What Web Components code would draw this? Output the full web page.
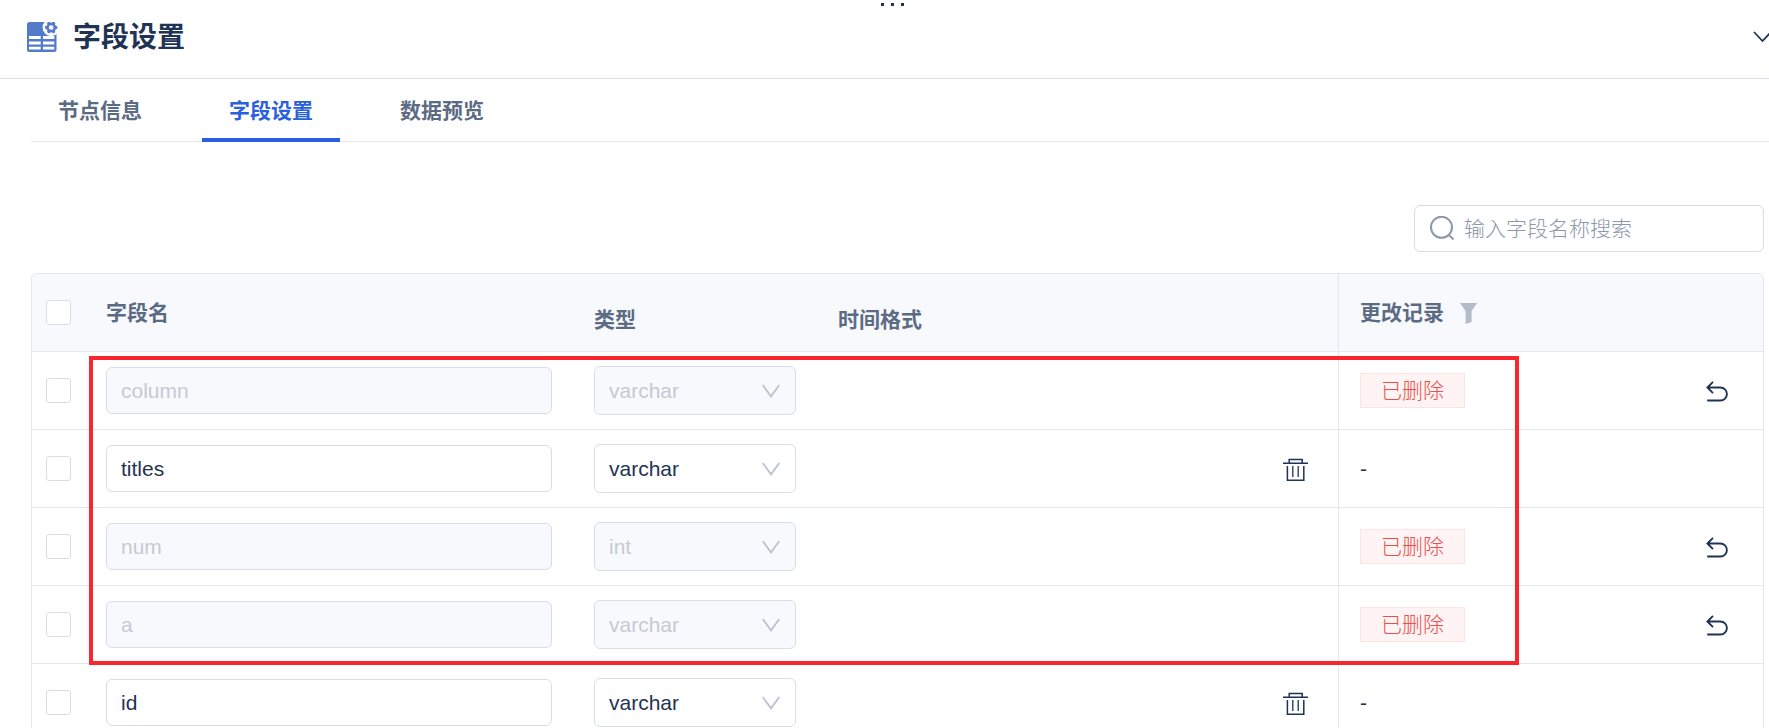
<!DOCTYPE html>
<html lang="zh-CN">
<head>
  <meta charset="UTF-8">
  <meta name="viewport" content="width=device-width, initial-scale=1.0">
  <title>字段设置</title>
  <style>
    :root {
      --text-color: #1f3355;
      --muted-color: #5c6b84;
      --hint-color: #8c97aa;
      --disabled-color: #c5cad3;
      --primary-color: #2a5fdd;
      --danger-color: #e8504d;
      --line-color: #e5e7ef;
      --control-line: #d9dde8;
      --fill-color: #f8f9fd;
    }

    body {
      margin: 0;
      background: white;
      color: var(--text-color);
      font-family: "Liberation Sans", "Noto Sans CJK SC", sans-serif;
      font-size: 21px;
      line-height: 30px;
    }
  </style>
</head>
<body>
  <settings-panel>
    <panel-header slot="header">字段设置</panel-header>
    <tab-bar slot="tabs" tabs="节点信息,字段设置,数据预览" active="1"></tab-bar>
    <search-box placeholder="输入字段名称搜索"></search-box>
    <field-table></field-table>
  </settings-panel>

  <script>
    class SettingsPanel extends HTMLElement {
      constructor() {
        super();
        this.attachShadow({ mode: "open" });
      }

      connectedCallback() {
        this.shadowRoot.innerHTML = `
            <style>
                :host {
                    display: flex;
                    flex-direction: column;
                    height: 100vh;
                    overflow: hidden;
                }

                ::slotted(*) {
                    flex-shrink: 0;
                }

                .content {
                    display: flex;
                    flex-direction: column;
                    gap: 21px;
                    padding: 63px 5px 0 31px;
                }
            </style>

            <slot name="header"></slot>
            <slot name="tabs"></slot>
            <main class="content"><slot></slot></main>
        `;
      }
    }

    class PanelHeader extends HTMLElement {
      constructor() {
        super();
        this.attachShadow({ mode: "open" });
      }

      connectedCallback() {
        this.shadowRoot.innerHTML = `
            <style>
                :host {
                    display: block;
                    position: relative;
                    margin-right: -16px;
                    border-bottom: 1px solid #dcdfe8;
                }

                header {
                    display: flex;
                    align-items: center;
                    gap: 15px;
                    height: 78px;
                    padding: 0 13px 4px 27px;
                    box-sizing: border-box;
                }

                h1 {
                    flex-grow: 1;
                    margin: 0;
                    padding-top: 2px;
                    font-size: 28px;
                    line-height: 40px;
                    font-weight: 700;
                }

                button {
                    padding: 0;
                    border: none;
                    background: none;
                    color: inherit;
                    cursor: pointer;
                }

                svg {
                    display: block;
                }

                .handle {
                    position: absolute;
                    top: 3px;
                    left: 0;
                    right: 0;
                    display: flex;
                    justify-content: center;
                    gap: 7px;
                }

                .handle i {
                    width: 3px;
                    height: 3px;
                    background-color: var(--text-color);
                }
            </style>

            <div class="handle"><i></i><i></i><i></i></div>
            <header>
                <svg width="31" height="30" viewBox="0 0 31 30" aria-hidden="true">
                    <rect width="29.5" height="30" rx="2.5" fill="#527cc9"/>
                    <path fill="white" d="M2 14h11.7v3H2zM16 14h11.3v3H16zM2 19.4h11.7v3H2zM16 19.4h11.3v3H16zM2 24.8h11.7v2.8H2zM16 24.8h11.3v2.8H16z"/>
                    <circle cx="24.2" cy="5.5" r="8.6" fill="white"/>
                    <g fill="#527cc9">
                        <circle cx="24.2" cy="5.5" r="4.9"/>
                        <rect x="18" y="3.9" width="12.4" height="3.2" rx="1"/>
                        <rect x="18" y="3.9" width="12.4" height="3.2" rx="1" transform="rotate(60 24.2 5.5)"/>
                        <rect x="18" y="3.9" width="12.4" height="3.2" rx="1" transform="rotate(120 24.2 5.5)"/>
                    </g>
                    <circle cx="24.2" cy="5.5" r="2.3" fill="white"/>
                </svg>
                <h1><slot></slot></h1>
                <button type="button" aria-label="收起">
                    <svg width="19" height="12" viewBox="0 0 19 12" fill="none" stroke="currentColor" stroke-width="1.8">
                        <path d="M1 1l8.5 9L18 1"/>
                    </svg>
                </button>
            </header>
        `;
      }
    }

    class TabBar extends HTMLElement {
      constructor() {
        super();
        this.attachShadow({ mode: "open" });
      }

      connectedCallback() {
        const tabs = this.getAttribute("tabs").split(",");
        const active = Number(this.getAttribute("active"));

        this.shadowRoot.innerHTML = `
            <style>
                :host {
                    display: block;
                    padding-left: 31px;
                }

                .tabs {
                    display: flex;
                    gap: 33px;
                    box-shadow: inset 0 -1px var(--line-color);
                }

                button {
                    height: 63px;
                    padding: 4px 27px 0;
                    border: none;
                    border-bottom: 4px solid transparent;
                    background: none;
                    color: var(--muted-color);
                    font: inherit;
                    font-weight: 700;
                    cursor: pointer;
                }

                button[aria-selected="true"] {
                    border-bottom-color: var(--primary-color);
                    color: var(--primary-color);
                }
            </style>

            <div class="tabs" role="tablist">
                ${tabs
                  .map((tab, i) => `<button type="button" role="tab" aria-selected="${i === active}">${tab}</button>`)
                  .join("")}
            </div>
        `;

        const buttons = this.shadowRoot.querySelectorAll("button");
        buttons.forEach((button) => {
          button.addEventListener("click", () => {
            buttons.forEach((b) => b.setAttribute("aria-selected", b === button));
          });
        });
      }
    }

    class SearchBox extends HTMLElement {
      constructor() {
        super();
        this.attachShadow({ mode: "open" });
      }

      connectedCallback() {
        const placeholder = this.getAttribute("placeholder") || "";

        this.shadowRoot.innerHTML = `
            <style>
                :host {
                    display: block;
                    align-self: flex-end;
                    width: 350px;
                }

                label {
                    display: flex;
                    align-items: center;
                    gap: 8px;
                    height: 47px;
                    padding: 0 15px;
                    border: 1px solid #d8dbe8;
                    border-radius: 6px;
                    box-sizing: border-box;
                    color: var(--hint-color);
                }

                svg {
                    flex-shrink: 0;
                }

                input {
                    flex-grow: 1;
                    min-width: 0;
                    padding: 0;
                    border: none;
                    outline: none;
                    background: none;
                    color: var(--text-color);
                    font: inherit;
                    font-weight: 300;
                }

                input::placeholder {
                    color: var(--hint-color);
                }
            </style>

            <label>
                <svg width="26" height="26" viewBox="0 0 26 26" fill="none" stroke="currentColor" stroke-width="2" aria-hidden="true">
                    <circle cx="11.5" cy="11.3" r="10.5"/>
                    <path d="M18.5 18.5l5 5"/>
                </svg>
                <input type="text" placeholder="${placeholder}" aria-label="${placeholder}">
            </label>
        `;
      }
    }

    class TypeSelect extends HTMLElement {
      constructor() {
        super();
        this.attachShadow({ mode: "open" });
      }

      connectedCallback() {
        const value = this.getAttribute("value");
        const disabled = this.hasAttribute("disabled") ? "disabled" : "";
        const types = ["varchar", "int"];

        this.shadowRoot.innerHTML = `
            <style>
                :host {
                    display: grid;
                    align-items: center;
                    width: 202px;
                }

                select,
                svg {
                    grid-area: 1 / 1;
                }

                select {
                    appearance: none;
                    width: 100%;
                    height: 49px;
                    padding: 0 40px 0 14px;
                    border: 1px solid var(--control-line);
                    border-radius: 6px;
                    background-color: white;
                    color: var(--text-color);
                    font: inherit;
                }

                select:disabled {
                    background-color: var(--fill-color);
                    color: var(--disabled-color);
                    opacity: 1;
                }

                svg {
                    justify-self: end;
                    margin-right: 16px;
                    pointer-events: none;
                }
            </style>

            <select aria-label="类型" ${disabled}>
                ${types.map((t) => `<option ${t === value ? "selected" : ""}>${t}</option>`).join("")}
            </select>
            <svg width="18" height="14" viewBox="0 0 18 14" fill="none" stroke="#bcc2cf" stroke-width="1.8" aria-hidden="true">
                <path d="M.7 1L9 12.4 17.3 1"/>
            </svg>
        `;
      }
    }

    class NameInput extends HTMLElement {
      constructor() {
        super();
        this.attachShadow({ mode: "open" });
      }

      connectedCallback() {
        const value = this.getAttribute("value") || "";
        const disabled = this.hasAttribute("disabled") ? "disabled" : "";

        this.shadowRoot.innerHTML = `
            <style>
                :host {
                    display: block;
                }

                input {
                    display: block;
                    width: 100%;
                    height: 47px;
                    padding: 0 14px;
                    border: 1px solid var(--control-line);
                    border-radius: 6px;
                    box-sizing: border-box;
                    background-color: white;
                    color: var(--text-color);
                    font: inherit;
                }

                input:disabled {
                    background-color: var(--fill-color);
                    color: var(--disabled-color);
                }
            </style>

            <input type="text" aria-label="字段名" value="${value}" ${disabled}>
        `;
      }
    }

    class StatusTag extends HTMLElement {
      constructor() {
        super();
        this.attachShadow({ mode: "open" });
      }

      connectedCallback() {
        this.shadowRoot.innerHTML = `
            <style>
                :host {
                    display: inline-block;
                    padding: 0 20px;
                    border: 1px solid #fde3e1;
                    background-color: #fff4f3;
                    color: var(--danger-color);
                    font-weight: 300;
                    line-height: 33px;
                    vertical-align: middle;
                }
            </style>

            <slot></slot>
        `;
      }
    }

    class IconButton extends HTMLElement {
      constructor() {
        super();
        this.attachShadow({ mode: "open" });
      }

      connectedCallback() {
        const icons = {
          trash: `
            <svg width="25" height="24" viewBox="0 0 25 24" fill="none" stroke="currentColor" stroke-width="1.5">
                <path d="M0 5.2h25M6.2 5V1.4h13V5M4.4 8v14.2h16.4V8"/>
                <path d="M9.8 8v11M15.2 8v11" stroke-width="1.3"/>
            </svg>`,
          undo: `
            <svg width="22" height="21" viewBox="0 0 22 21" fill="none" stroke="currentColor" stroke-width="1.9">
                <path d="M7 .9L1.4 6.5 7 12.1M1.4 6.5h13a6.5 6.5 0 0 1 0 13H1.2"/>
            </svg>`,
        };

        this.shadowRoot.innerHTML = `
            <style>
                :host {
                    display: inline-block;
                    vertical-align: middle;
                }

                button {
                    display: block;
                    padding: 0;
                    border: none;
                    background: none;
                    color: inherit;
                    cursor: pointer;
                }

                svg {
                    display: block;
                }
            </style>

            <button type="button" aria-label="${this.getAttribute("label")}">${icons[this.getAttribute("icon")]}</button>
        `;
      }
    }

    class FieldTable extends HTMLElement {
      constructor() {
        super();
        this.attachShadow({ mode: "open" });

        this.fields = [
          { name: "column", type: "varchar", deleted: true },
          { name: "titles", type: "varchar", deleted: false },
          { name: "num", type: "int", deleted: true },
          { name: "a", type: "varchar", deleted: true },
          { name: "id", type: "varchar", deleted: false },
        ];
      }

      renderRow({ name, type, deleted }) {
        const disabled = deleted ? "disabled" : "";

        return `
            <tr>
                <td class="check"><input type="checkbox" aria-label="${name}"></td>
                <td class="name"><name-input value="${name}" ${disabled}></name-input></td>
                <td><type-select value="${type}" ${disabled}></type-select></td>
                <td></td>
                <td class="remove">${deleted ? "" : `<icon-button icon="trash" label="删除"></icon-button>`}</td>
                <td class="change">${deleted ? "<status-tag>已删除</status-tag>" : "-"}</td>
                <td class="restore">${deleted ? `<icon-button icon="undo" label="恢复"></icon-button>` : ""}</td>
            </tr>`;
      }

      connectedCallback() {
        this.shadowRoot.innerHTML = `
            <style>
                :host {
                    display: block;
                    position: relative;
                }

                table {
                    width: 100%;
                    table-layout: fixed;
                    border: 1px solid var(--line-color);
                    border-radius: 6px;
                    border-collapse: separate;
                    border-spacing: 0;
                    overflow: hidden;
                }

                .col-check { width: 57px; }
                .col-name { width: 488px; }
                .col-type { width: 244px; }
                .col-remove { width: 72px; }
                .col-change { width: 300px; }
                .col-restore { width: 125px; }

                th,
                td {
                    height: 78px;
                    padding: 0 0 0 17px;
                    border-bottom: 1px solid var(--line-color);
                    box-sizing: border-box;
                    text-align: left;
                    vertical-align: middle;
                }

                th {
                    background-color: var(--fill-color);
                    color: var(--muted-color);
                    font-weight: 700;
                }

                th.plain {
                    padding-top: 14px;
                }

                .check {
                    padding-left: 14px;
                }

                .name {
                    padding-right: 25px;
                }

                .change {
                    padding-left: 21px;
                    border-left: 1px solid var(--line-color);
                }

                .remove,
                .restore {
                    padding-left: 0;
                    text-align: right;
                }

                .remove {
                    padding-right: 30px;
                }

                .restore {
                    padding-right: 35px;
                }

                input[type="checkbox"] {
                    appearance: none;
                    display: block;
                    width: 25px;
                    height: 25px;
                    margin: 0;
                    border: 1px solid var(--control-line);
                    border-radius: 3px;
                    background-color: white;
                }

                input[type="checkbox"]:checked {
                    border-color: var(--primary-color);
                    background-color: var(--primary-color);
                }

                .with-filter {
                    display: flex;
                    align-items: center;
                    gap: 16px;
                }

                .with-filter button {
                    padding: 2px 0 0;
                    border: none;
                    background: none;
                    cursor: pointer;
                }

                svg {
                    display: block;
                }

                .highlight {
                    position: absolute;
                    top: 83px;
                    left: 58px;
                    right: 245px;
                    height: 309px;
                    border: 4px solid #f9262d;
                    box-sizing: border-box;
                    pointer-events: none;
                }
            </style>

            <table>
                <colgroup>
                    <col class="col-check">
                    <col class="col-name">
                    <col class="col-type">
                    <col>
                    <col class="col-remove">
                    <col class="col-change">
                    <col class="col-restore">
                </colgroup>
                <thead>
                    <tr>
                        <th class="check"><input type="checkbox" aria-label="全选"></th>
                        <th>字段名</th>
                        <th class="plain">类型</th>
                        <th class="plain">时间格式</th>
                        <th></th>
                        <th class="change">
                            <div class="with-filter">
                                更改记录
                                <button type="button" aria-label="筛选">
                                    <svg width="17" height="21" viewBox="0 0 17 21" fill="#b3bac8">
                                        <path d="M0 0h17l-5.4 8v11L5.6 21V8z"/>
                                    </svg>
                                </button>
                            </div>
                        </th>
                        <th></th>
                    </tr>
                </thead>
                <tbody>
                    ${this.fields.map((field) => this.renderRow(field)).join("")}
                </tbody>
            </table>
            <div class="highlight"></div>
        `;
      }
    }

    customElements.define("settings-panel", SettingsPanel);
    customElements.define("panel-header", PanelHeader);
    customElements.define("tab-bar", TabBar);
    customElements.define("search-box", SearchBox);
    customElements.define("type-select", TypeSelect);
    customElements.define("name-input", NameInput);
    customElements.define("status-tag", StatusTag);
    customElements.define("icon-button", IconButton);
    customElements.define("field-table", FieldTable);
  </script>
</body>
</html>
